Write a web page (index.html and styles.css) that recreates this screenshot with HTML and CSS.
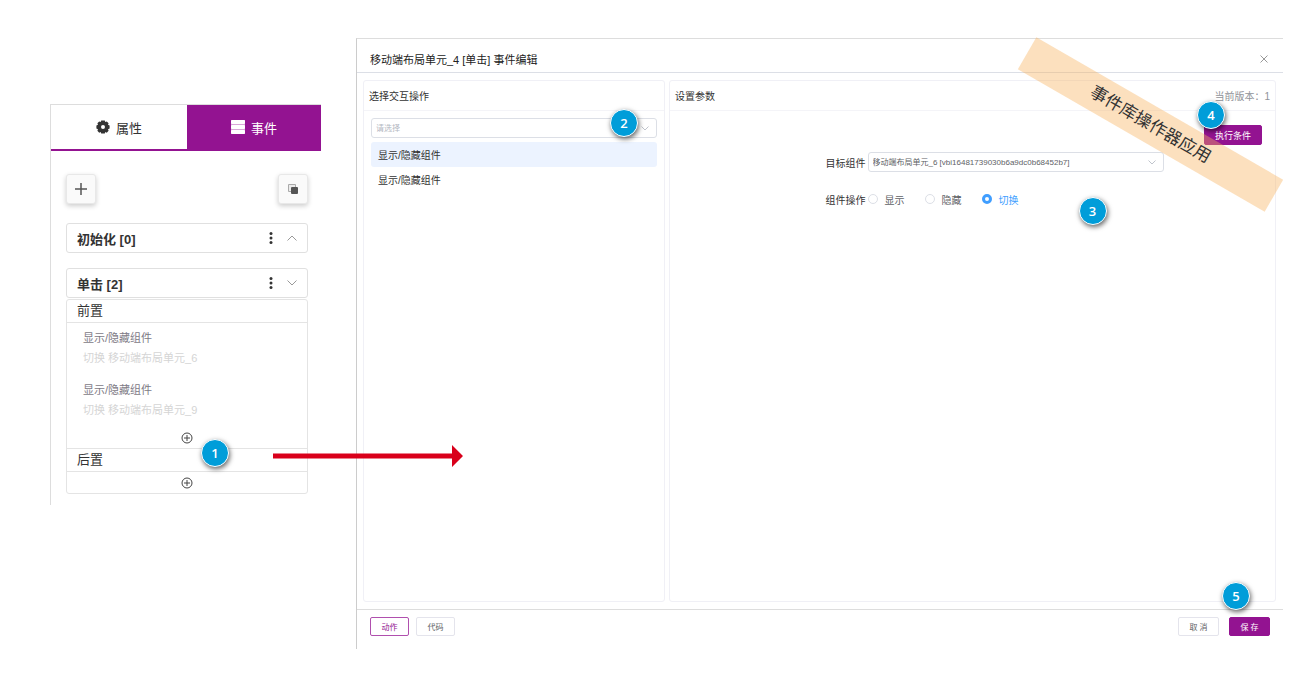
FILE: index.html
```html
<!DOCTYPE html>
<html lang="zh-CN">
<head>
  <meta charset="UTF-8" />
  <meta name="viewport" content="width=device-width, initial-scale=1.0" />
  <title>事件编辑</title>
  <link rel="stylesheet" href="styles.css">
</head>
<body>
  <div class="page">
    <aside class="sidebar">
      <div class="tabs">
        <button class="tab-btn" id="propTab">
          <svg width="14" height="14" viewBox="0 0 14 14"><path fill="currentColor" fill-rule="evenodd" d="M5.2.4h3.6l.5 1.5 1.5-.5 1.8 1.9-.6 1.4 1.6.7v3.2l-1.6.7.6 1.5-1.8 1.9-1.5-.6-.5 1.5H5.2l-.5-1.5-1.5.6-1.8-1.9.6-1.5L.4 8.600V5.400L2 4.700l-.6-1.400 1.800-1.900 1.500.5zM7 5a2 2 0 1 0 0 4 2 2 0 0 0 0-4z"/></svg>
          属性
        </button>
        <button class="tab-btn active" id="eventTab">
          <svg width="14" height="14" viewBox="0 0 14 14"><rect width="14" height="14" rx="1" fill="#d9a6d8"/><g fill="currentColor"><rect width="14" height="4" rx="1"/><rect y="5" width="14" height="4" rx="1"/><rect y="10" width="14" height="4" rx="1"/></g></svg>
          事件
        </button>
      </div>

      <div class="toolbar">
        <button class="tool-btn" aria-label="添加">
          <svg width="12" height="12" viewBox="0 0 12 12"><path d="M6 0v12M0 6h12" stroke="#555" stroke-width="1.500"/></svg>
        </button>
        <button class="tool-btn" aria-label="复制">
          <svg width="10" height="10" viewBox="0 0 10 10"><path d="M.5 7.500V.5h7M.5 7.500H3M7.500.5V3" fill="none" stroke="#aaa"/><path d="M1 2h6M1 4h2M1 6h2" stroke="#ddd"/><rect x="3" y="3" width="7" height="7" rx="1" fill="#555"/></svg>
        </button>
      </div>

      <div class="event-head">
        <strong>初始化 [0]</strong>
        <button class="icon-btn" aria-label="更多"><svg width="4" height="12" viewBox="0 0 4 12"><g fill="#333"><circle cx="2" cy="1.500" r="1.500"/><circle cx="2" cy="6" r="1.500"/><circle cx="2" cy="10.500" r="1.500"/></g></svg></button>
        <button class="icon-btn" aria-label="展开"><svg width="10" height="6" viewBox="0 0 10 6"><path d="M.5 5.500 5 1l4.500 4.500" fill="none" stroke="#999"/></svg></button>
      </div>

      <div class="event-head">
        <strong>单击 [2]</strong>
        <button class="icon-btn" aria-label="更多"><svg width="4" height="12" viewBox="0 0 4 12"><g fill="#333"><circle cx="2" cy="1.500" r="1.500"/><circle cx="2" cy="6" r="1.500"/><circle cx="2" cy="10.500" r="1.500"/></g></svg></button>
        <button class="icon-btn" aria-label="收起"><svg width="10" height="6" viewBox="0 0 10 6"><path d="M.5.5 5 5 9.500.5" fill="none" stroke="#999"/></svg></button>
      </div>
      <div class="event-body">
        <h3 class="phase">前置</h3>
        <div class="action">
          <p>显示/隐藏组件</p>
          <p class="action-desc">切换 移动端布局单元_6</p>
        </div>
        <div class="action">
          <p>显示/隐藏组件</p>
          <p class="action-desc">切换 移动端布局单元_9</p>
        </div>
        <button class="add-btn" aria-label="添加前置操作"><svg width="12" height="12" viewBox="0 0 12 12"><path d="M6 3v6M3 6h6M11 6A5 5 0 1 1 1 6a5 5 0 0 1 10 0z" fill="none" stroke="#444"/></svg></button>
        <h3 class="phase phase-after">后置</h3>
        <button class="add-btn" aria-label="添加后置操作"><svg width="12" height="12" viewBox="0 0 12 12"><path d="M6 3v6M3 6h6M11 6A5 5 0 1 1 1 6a5 5 0 0 1 10 0z" fill="none" stroke="#444"/></svg></button>
        <span class="badge badge-1">1</span>
        <svg class="arrow" width="190" height="22" viewBox="0 0 190 22"><path d="M0 8.500h179V0l11 11-11 11v-8.500H0z" fill="#d9001b"/></svg>
      </div>
    </aside>

    <main class="dialog">
      <header class="dialog-header">
        <h1>移动端布局单元_4 [单击] 事件编辑</h1>
        <button class="icon-btn" aria-label="关闭"><svg width="8" height="8" viewBox="0 0 8 8"><path d="M.5.5l7 7M7.500.5l-7 7" stroke="#999"/></svg></button>
      </header>

      <div class="panels">
        <section class="panel">
          <div class="panel-head"><h2>选择交互操作</h2></div>
          <div class="picker">
            <div class="select-wrap">
              <select class="placeholder" aria-label="选择交互操作">
                <option>请选择</option>
              </select>
              <svg class="chevron" width="8" height="5" viewBox="0 0 8 5"><path d="M.5.5 4 4 7.500.5" fill="none" stroke="#c0c4cc"/></svg>
              <span class="badge badge-2">2</span>
            </div>
            <button class="pick-item active">显示/隐藏组件</button>
            <button class="pick-item">显示/隐藏组件</button>
          </div>
        </section>

        <section class="panel">
          <div class="panel-head">
            <h2>设置参数</h2>
            <span class="version">当前版本：1</span>
          </div>
          <div class="condition">
            <div class="condition-wrap">
              <button class="btn btn-primary btn-condition">执行条件</button>
              <span class="badge badge-4">4</span>
            </div>
          </div>
          <form class="params">
            <div class="field">
              <label for="target">目标组件</label>
              <div class="select-wrap">
                <select id="target">
                  <option>移动端布局单元_6 [vbi16481739030b6a9dc0b68452b7]</option>
                </select>
                <svg class="chevron" width="8" height="5" viewBox="0 0 8 5"><path d="M.5.5 4 4 7.500.5" fill="none" stroke="#c0c4cc"/></svg>
              </div>
            </div>
            <div class="field">
              <span id="opLabel">组件操作</span>
              <div class="radios" role="radiogroup" aria-labelledby="opLabel">
                <label><input type="radio" name="op"> 显示</label>
                <label><input type="radio" name="op"> 隐藏</label>
                <label><input type="radio" name="op" checked> 切换</label>
              </div>
              <span class="badge badge-3">3</span>
            </div>
          </form>
        </section>
      </div>

      <footer class="dialog-footer">
        <button class="btn btn-outline">动作</button>
        <button class="btn">代码</button>
        <div class="footer-right">
          <button class="btn btn-wide">取 消</button>
          <button class="btn btn-wide btn-primary">保 存</button>
          <span class="badge badge-5">5</span>
        </div>
      </footer>

      <div class="ribbon">事件库操作器应用</div>
    </main>
  </div>
</body>
</html>
```
FILE: styles.css
```css
* {
  box-sizing: border-box;
}
body {
  margin: 0;
  background: #fff;
  color: #333;
  font-family: "Liberation Sans", "Noto Sans CJK SC", sans-serif;
  font-size: 10px;
}
h1, h2, h3, p {
  margin: 0;
  font-weight: normal;
}
button, select {
  font-family: inherit;
  color: inherit;
}
button {
  padding: 0;
  border: none;
  background: none;
  cursor: pointer;
}
svg {
  display: block;
}
.page {
  display: flex;
  align-items: flex-start;
  gap: 35px;
  min-height: 100vh;
  padding: 38px 21px 34px 50px;
}

/* sidebar */
.sidebar {
  flex: 0 0 271px;
  margin-top: 66px;
  padding-bottom: 11px;
  border-left: 1px solid #ddd;
}
.tabs {
  display: grid;
  grid-template-columns: 136px 1fr;
  height: 47px;
  border-top: 1px solid #ddd;
  border-bottom: 2px solid #931391;
}
.tab-btn {
  display: flex;
  align-items: center;
  justify-content: center;
  gap: 6px;
  font-size: 13px;
}
.tab-btn.active {
  background: #931391;
  color: #fff;
}
.toolbar {
  display: flex;
  justify-content: space-between;
  margin: 23px 13px 19px 15px;
}
.tool-btn {
  display: flex;
  align-items: center;
  justify-content: center;
  width: 30px;
  height: 30px;
  border: 1px solid #e8e8e8;
  border-radius: 3px;
  background: #fafafa;
  box-shadow: 0 2px 5px rgba(0, 0, 0, 0.2);
}
.event-head {
  display: flex;
  align-items: center;
  gap: 14px;
  height: 30px;
  margin: 0 13px 15px 15px;
  padding: 0 10px;
  border: 1px solid #e0e0e0;
  border-radius: 3px;
  font-size: 13px;
}
.event-head strong {
  flex: 1;
}
.event-body {
  position: relative;
  margin: -14px 13px 0 15px;
  border: 1px solid #e4e4e4;
  border-radius: 3px;
}
.phase {
  padding-left: 10px;
  border-bottom: 1px solid #e4e4e4;
  font-size: 13px;
  line-height: 22px;
}
.phase-after {
  border-top: 1px solid #e4e4e4;
}
.action {
  padding: 5px 16px 7px;
  color: #7d7a85;
  font-size: 11px;
  line-height: 20px;
}
.action-desc {
  color: #d5d5d5;
}
.add-btn {
  display: flex;
  align-items: center;
  justify-content: center;
  width: 100%;
  height: 21px;
}

/* dialog */
.dialog {
  position: relative;
  display: flex;
  flex: 1;
  flex-direction: column;
  min-height: calc(100vh - 72px);
  border-top: 1px solid #ddd;
  border-left: 1px solid #ccc;
}
.dialog-header {
  display: flex;
  align-items: center;
  justify-content: space-between;
  height: 34px;
  padding: 6px 15px 0 13px;
  border-bottom: 1px solid #dcdfe6;
}
.dialog-header h1 {
  color: #222;
  font-size: 11px;
}
.panels {
  display: grid;
  flex: 1;
  grid-template-columns: 302fr 607fr;
  gap: 4px;
  padding: 7px 7px 7px 6px;
}
.panel {
  border: 1px solid #f0f0f6;
  border-radius: 3px;
}
.panel-head {
  display: flex;
  align-items: center;
  justify-content: space-between;
  height: 30px;
  padding: 0 5px;
  border-bottom: 1px solid #f4f4f8;
}
.panel-head h2 {
  font-size: 10px;
}
.version {
  color: #909399;
}
.picker {
  padding: 7px;
}
.select-wrap {
  position: relative;
  flex: 1;
}
select {
  display: block;
  width: 100%;
  height: 20px;
  padding: 0 20px 0 4px;
  border: 1px solid #dcdfe6;
  border-radius: 3px;
  appearance: none;
  background: #fff;
  color: #606266;
  font-size: 8px;
}
select.placeholder {
  color: #b4b8c2;
}
.chevron {
  position: absolute;
  top: 8px;
  right: 8px;
}
.pick-item {
  display: block;
  width: 100%;
  height: 25px;
  padding-left: 7px;
  border-radius: 3px;
  font-size: 10px;
  text-align: left;
}
.pick-item.active {
  margin-top: 4px;
  background: #ecf3ff;
}
.condition {
  display: flex;
  justify-content: flex-end;
  padding: 14px 13px 7px;
}
.condition-wrap {
  position: relative;
}
.params {
  width: 382px;
  margin: 0 auto;
  padding-left: 44px;
}
.field {
  position: relative;
  display: flex;
  align-items: center;
  gap: 2px;
  height: 20px;
  margin-bottom: 17px;
}
.radios {
  display: flex;
  gap: 20px;
}
.radios label {
  display: flex;
  align-items: center;
  gap: 7px;
  color: #606266;
}
.radios label:has(:checked) {
  color: #409eff;
}
.radios input {
  width: 10px;
  height: 10px;
  margin: 0;
  border: 1px solid #dcdfe6;
  border-radius: 50%;
  appearance: none;
}
.radios input:checked {
  border: 3px solid #409eff;
}
.btn {
  width: 39px;
  height: 19px;
  border: 1px solid #e4e4ec;
  border-radius: 2px;
  color: #606266;
  font-size: 8px;
}
.btn-wide {
  width: 41px;
}
.btn-outline {
  border-color: #b04fae;
  color: #931391;
}
.btn-primary {
  border-color: #931391;
  background: #931391;
  color: #fff;
}
.btn-condition {
  display: block;
  width: 58px;
  height: 20px;
  font-size: 9px;
}
.dialog-footer {
  display: flex;
  gap: 7px;
  height: 40px;
  padding: 7px 13px;
  border-top: 1px solid #ddd;
}
.footer-right {
  position: relative;
  display: flex;
  gap: 10px;
  margin-left: auto;
}

/* annotations lying over the screens */
.ribbon {
  position: absolute;
  top: 67px;
  right: -10px;
  width: 285px;
  transform: rotate(30deg);
  background: rgba(248, 178, 92, 0.4);
  color: #333;
  font-size: 17px;
  line-height: 37px;
  text-align: center;
}
.badge {
  position: absolute;
  z-index: 1;
  width: 28px;
  height: 28px;
  border: 1px solid #fff;
  border-radius: 50%;
  background: #009dd9;
  box-shadow: 1px 2px 5px rgba(0, 0, 0, 0.6);
  color: #fff;
  font-family: "Open Sans", sans-serif;
  font-size: 13px;
  font-weight: 600;
  line-height: 26px;
  text-align: center;
}
.badge-1 {
  top: 139px;
  left: 134px;
}
.badge-2 {
  top: -9px;
  right: 19px;
}
.badge-3 {
  top: 8px;
  right: 57px;
}
.badge-4 {
  top: -24px;
  left: -7px;
}
.badge-5 {
  top: -35px;
  right: 20px;
}
.arrow {
  position: absolute;
  z-index: 1;
  top: 145px;
  left: 206px;
}
```
